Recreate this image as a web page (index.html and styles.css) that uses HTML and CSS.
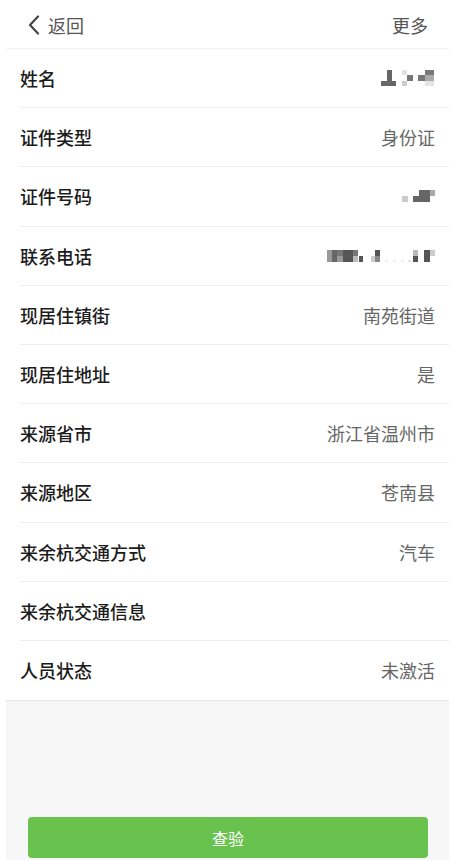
FILE: index.html
```html
<!DOCTYPE html>
<html lang="zh-CN">
<head>
<meta charset="utf-8">
<title>人员信息</title>
<link rel="stylesheet" href="styles.css">
</head>
<body>
<div class="page">
  <header class="topbar">
    <div class="back">
      <svg class="chev" width="12" height="20" viewBox="0 0 12 20"><path d="M10 1.5 L2 10 L10 18.5" fill="none" stroke="#444" stroke-width="2.2" stroke-linecap="round" stroke-linejoin="round"/></svg>
      <span>返回</span>
    </div>
    <div class="more">更多</div>
  </header>
  <ul class="list">
    <li class="row"><span class="label">姓名</span>
      <svg class="mask" width="54" height="16" viewBox="0 0 54 16">
        <rect x="6" y="0" width="5" height="11" fill="#666"/>
        <rect x="0" y="11" width="15" height="5" fill="#666"/>
        <rect x="21" y="0" width="5" height="5" fill="#e2e2e2"/>
        <rect x="26" y="5" width="6" height="6" fill="#777"/>
        <rect x="21" y="11" width="5" height="5" fill="#ccc"/>
        <rect x="37" y="5" width="7" height="6" fill="#777"/>
        <rect x="44" y="0" width="9" height="5" fill="#777"/>
        <rect x="44" y="5" width="9" height="6" fill="#aaa"/>
        <rect x="44" y="11" width="9" height="5" fill="#e5e5e5"/>
      </svg>
    </li>
    <li class="row"><span class="label">证件类型</span><span class="value">身份证</span></li>
    <li class="row"><span class="label">证件号码</span>
      <svg class="mask" width="33" height="12" viewBox="0 0 33 12">
        <rect x="0" y="6" width="6" height="6" fill="#ccc"/>
        <rect x="11" y="6" width="17" height="6" fill="#666"/>
        <rect x="17" y="0" width="11" height="6" fill="#666"/>
        <rect x="28" y="0" width="5" height="6" fill="#aaa"/>
      </svg>
    </li>
    <li class="row"><span class="label">联系电话</span>
      <svg class="mask" width="108" height="12" viewBox="0 0 108 12">
        <rect x="0" y="0" width="5" height="12" fill="#999"/>
        <rect x="5" y="0" width="5" height="12" fill="#666"/>
        <rect x="10" y="0" width="6" height="6" fill="#777"/>
        <rect x="10" y="6" width="6" height="6" fill="#999"/>
        <rect x="16" y="0" width="10" height="12" fill="#555"/>
        <rect x="26" y="0" width="5" height="6" fill="#777"/>
        <rect x="26" y="6" width="5" height="6" fill="#bbb"/>
        <rect x="32" y="6" width="4" height="6" fill="#555"/>
        <rect x="44" y="6" width="4" height="6" fill="#ccc"/>
        <rect x="48" y="0" width="5" height="6" fill="#555"/>
        <rect x="48" y="6" width="5" height="6" fill="#888"/>
        <rect x="58" y="10" width="3" height="2" fill="#eee"/>
        <rect x="66" y="10" width="3" height="2" fill="#eee"/>
        <rect x="74" y="10" width="3" height="2" fill="#eee"/>
        <rect x="81" y="10" width="3" height="2" fill="#e5e5e5"/>
        <rect x="86" y="0" width="5" height="6" fill="#bbb"/>
        <rect x="86" y="6" width="5" height="6" fill="#555"/>
        <rect x="97" y="0" width="6" height="12" fill="#555"/>
        <rect x="103" y="0" width="5" height="6" fill="#ccc"/>
      </svg>
    </li>
    <li class="row"><span class="label">现居住镇街</span><span class="value">南苑街道</span></li>
    <li class="row"><span class="label">现居住地址</span><span class="value">是</span></li>
    <li class="row"><span class="label">来源省市</span><span class="value">浙江省温州市</span></li>
    <li class="row"><span class="label">来源地区</span><span class="value">苍南县</span></li>
    <li class="row"><span class="label">来余杭交通方式</span><span class="value">汽车</span></li>
    <li class="row"><span class="label">来余杭交通信息</span><span class="value"></span></li>
    <li class="row last"><span class="label">人员状态</span><span class="value">未激活</span></li>
  </ul>
  <div class="footer">
    <button class="btn" type="button">查验</button>
  </div>
</div>
</body>
</html>
```

FILE: styles.css
```css
* { box-sizing: border-box; }
html, body { margin: 0; padding: 0; background: #fff; }
body {
  font-family: "Noto Sans CJK SC", "Noto Sans", sans-serif;
  min-height: 100vh;
}
.page {
  margin: 0 5px 0 6px;
  min-height: 100vh;
  display: flex;
  flex-direction: column;
}
.topbar {
  height: 49px;
  border-bottom: 1px solid #f1f1f1;
  display: flex;
  align-items: center;
  justify-content: space-between;
  padding: 2px 21px 0 22px;
}
.back {
  display: flex;
  align-items: center;
  gap: 8px;
  color: #555;
  font-size: 18px;
}
.chev { display: block; }
.more { color: #555; font-size: 18px; }
.list {
  list-style: none;
  margin: 0;
  padding: 0;
}
.row {
  height: 59.2px;
  margin-left: 14px;
  padding-right: 14px;
  border-bottom: 1px solid #eeeeee;
  display: flex;
  align-items: center;
  justify-content: space-between;
}
.row.last { border-bottom: none; }
.label {
  font-size: 18px;
  font-weight: 500;
  color: #1c1c1c;
}
.value {
  font-size: 18px;
  color: #666;
}
.mask { display: block; }
.footer {
  flex: 1;
  background: #f7f7f7;
  border-top: 1px solid #e4e4e4;
  padding: 116px 21px 0 22px;
}
.btn {
  display: block;
  width: 400px;
  height: 41px;
  border: none;
  border-radius: 4px;
  background: #69c24e;
  color: #fff;
  font-family: "Noto Sans CJK SC", sans-serif;
  font-size: 16px;
  padding: 0;
}
```
